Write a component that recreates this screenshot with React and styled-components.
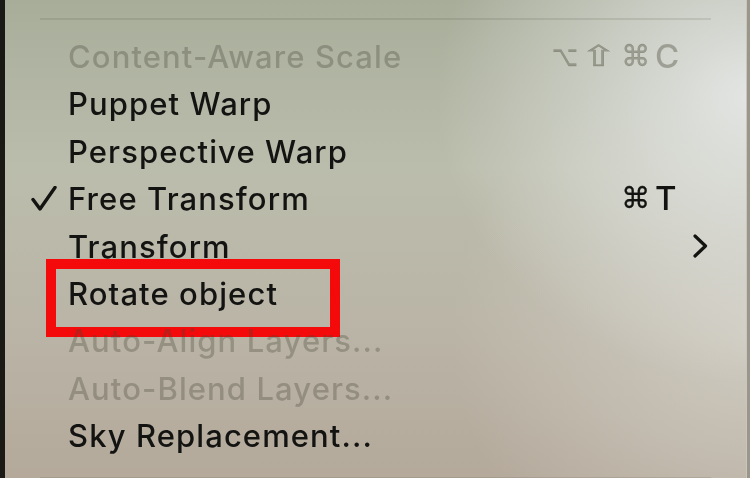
import React from "react";
import styled, { createGlobalStyle, css } from "styled-components";

const Global = createGlobalStyle`
  html, body { margin: 0; padding: 0; background: #b8b6a8; }
  body { width: 750px; height: 478px; overflow: hidden; }
`;

const Screen = styled.div`
  width: 750px;
  height: 478px;
  box-sizing: border-box;
  overflow: hidden;
  border-left: 5px solid #1b1916;
  box-shadow: inset -3px 0 0 #9a968b, inset -4px 0 0 #c9c6bc;
  background:
    radial-gradient(ellipse 42% 60% at 100% 20%, rgba(228, 231, 229, 0.95), rgba(228, 231, 229, 0) 100%),
    radial-gradient(ellipse 40% 60% at 100% 70%, rgba(215, 212, 203, 0.7), rgba(215, 212, 203, 0) 100%),
    linear-gradient(to bottom, #a8ad9a 0%, #bbbdac 35%, #bab4a6 70%, #b4a99b 100%);
  font-family: Inter, "Noto Sans", "DejaVu Sans", sans-serif;
  filter: blur(0.45px);
`;

const Menu = styled.div`
  display: flex;
  flex-direction: column;
  padding: 18px 39px 0 0;
`;

const Separator = styled.div`
  height: 2px;
  margin-left: 35px;
  background: rgba(60, 66, 50, 0.13);
  ${(p) => p.$bottom && css`margin-top: 17px;`}
  ${(p) => !p.$bottom && css`margin-bottom: 13px;`}
`;

const Row = styled.div`
  position: relative;
  display: grid;
  grid-template-columns: 63px 1fr auto 42px 21px;
  align-items: center;
  height: 47.4px;
  line-height: 47.4px;
  font-size: 31px;
  font-weight: 450;
  letter-spacing: 1.1px;
  color: ${(p) => (p.$disabled ? "rgba(70, 70, 55, 0.32)" : "#131311")};
  ${(p) =>
    p.$boxed &&
    css`
      &::after {
        content: "";
        position: absolute;
        left: 41px;
        top: -11px;
        width: 294px;
        height: 78px;
        box-sizing: border-box;
        border: 10px solid #f40a0a;
        pointer-events: none;
      }
    `}
`;

const CheckCell = styled.div`
  display: flex;
  align-items: center;
  padding-left: 26px;
  height: 100%;
`;

const Label = styled.span`
  white-space: nowrap;
`;

const Mods = styled.span`
  display: flex;
  gap: 9px;
  justify-content: flex-end;
  color: ${(p) => (p.$disabled ? "rgba(70, 70, 55, 0.38)" : "#131311")};
`;

const ModGlyph = styled.span`
  display: inline-block;
  width: 27px;
  text-align: center;
  font-family: "DejaVu Sans", sans-serif;
  font-size: 29px;
  letter-spacing: 0;
  -webkit-text-stroke: 0.3px currentColor;
  transform: scaleX(${(p) => p.$sx || 1});
`;

const Key = styled.span`
  padding-left: 7px;
  font-size: 33px;
  letter-spacing: 0;
  color: ${(p) => (p.$disabled ? "rgba(70, 70, 55, 0.38)" : "#131311")};
`;

const Arrow = styled.div`
  display: flex;
  align-items: center;
  justify-content: flex-end;
  height: 100%;
  padding-right: 3px;
`;

const Check = () => (
  <svg width="26" height="26" viewBox="0 0 26 26">
    <path d="M2 13.5 L9 23 L24 1.5" fill="none" stroke="#131311" strokeWidth="3.4" strokeLinecap="round" strokeLinejoin="round" />
  </svg>
);

const Chevron = () => (
  <svg width="16" height="24" viewBox="0 0 16 24">
    <path d="M3 2 L13.5 12 L3 22" fill="none" stroke="#131311" strokeWidth="3.2" strokeLinecap="round" strokeLinejoin="round" />
  </svg>
);

const OPT = { ch: "⌥", sx: 0.78 };
const SHIFT = { ch: "⇧", sx: 1.55 };
const CMD = { ch: "⌘", sx: 1 };

const items = [
  { label: "Content-Aware Scale", disabled: true, mods: [OPT, SHIFT, CMD], key: "C" },
  { label: "Puppet Warp" },
  { label: "Perspective Warp" },
  { label: "Free Transform", checked: true, mods: [CMD], key: "T" },
  { label: "Transform", submenu: true },
  { label: "Rotate object", boxed: true },
  { label: "Auto-Align Layers...", disabled: true },
  { label: "Auto-Blend Layers...", disabled: true },
  { label: "Sky Replacement..." },
];

export default function App() {
  return (
    <>
      <Global />
      <Screen>
        <Menu>
          <Separator />
          {items.map((it) => (
            <Row key={it.label} $disabled={it.disabled} $boxed={it.boxed}>
              <CheckCell>{it.checked && <Check />}</CheckCell>
              <Label>{it.label}</Label>
              <Mods $disabled={it.disabled}>
                {(it.mods || []).map((m) => (
                  <ModGlyph key={m.ch} $sx={m.sx}>{m.ch}</ModGlyph>
                ))}
              </Mods>
              <Key $disabled={it.disabled}>{it.key || ""}</Key>
              <Arrow>{it.submenu && <Chevron />}</Arrow>
            </Row>
          ))}
          <Separator $bottom />
        </Menu>
      </Screen>
    </>
  );
}
